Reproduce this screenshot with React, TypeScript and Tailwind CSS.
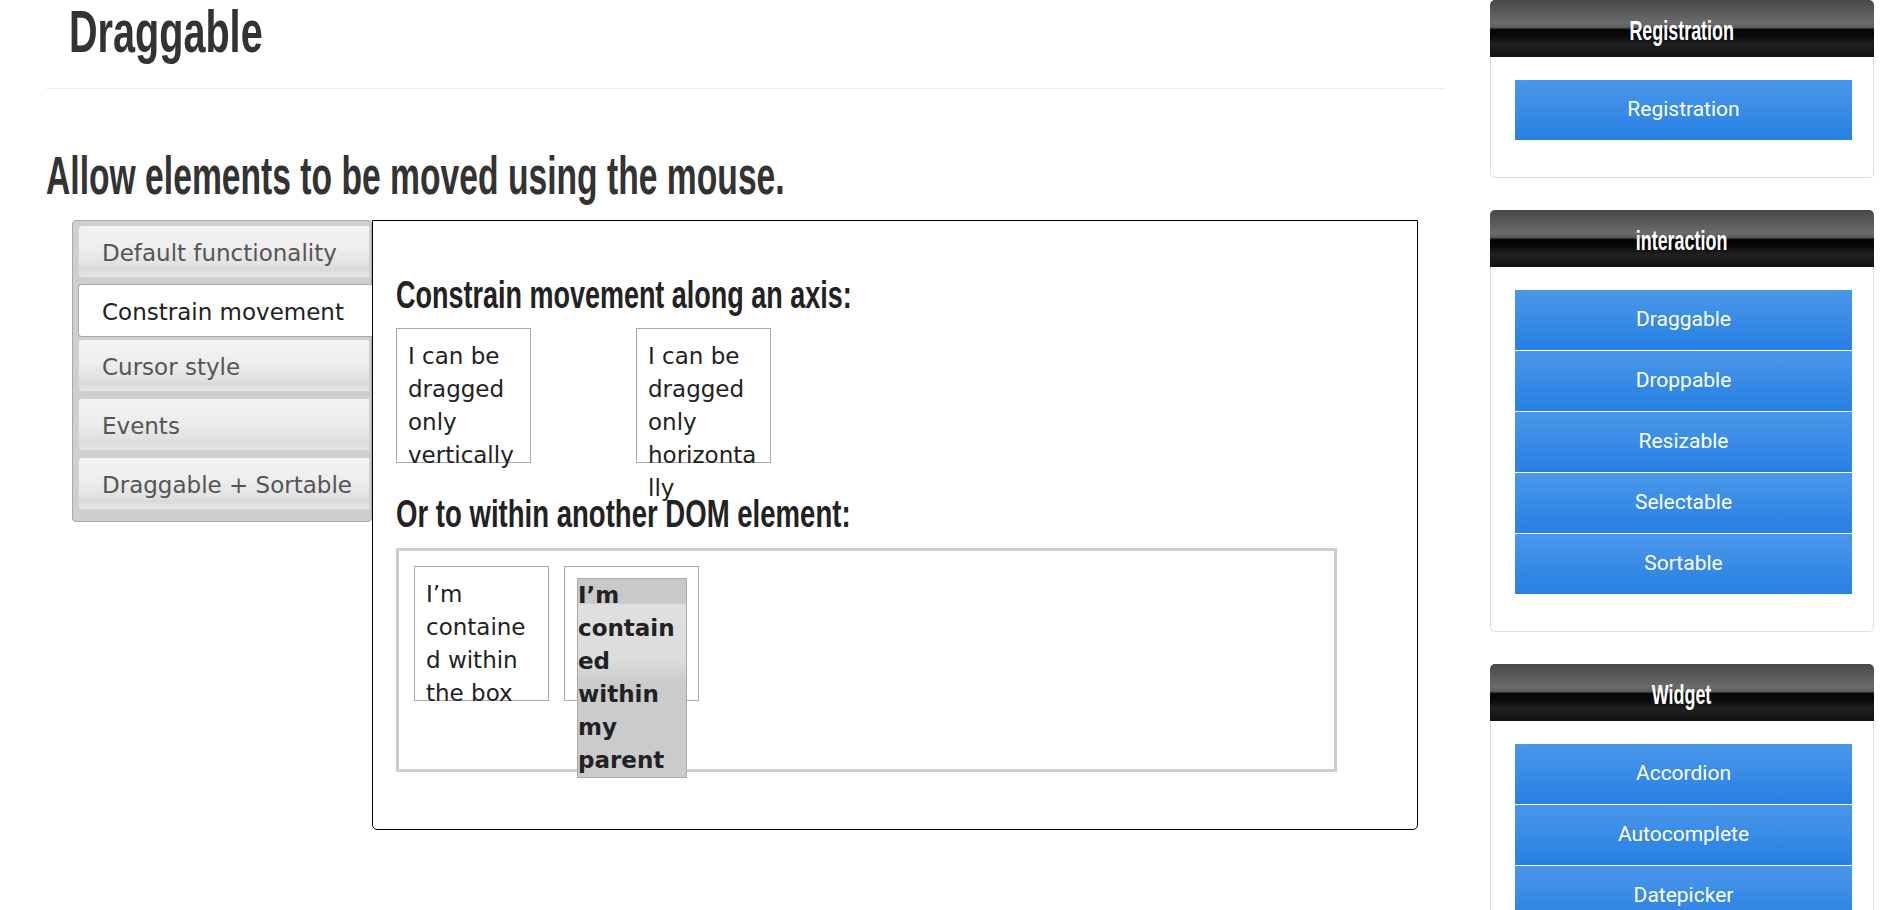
import React from 'react';

// Oswald is not available, so a bold sans is squeezed horizontally to get the same condensed look
const oswaldFont = "font-bold font-['Liberation_Sans','Arial',sans-serif]";
const squeeze = 'inline-block whitespace-nowrap';
const verdana = "font-['DejaVu_Sans','Verdana',sans-serif]";
const roboto = "font-['Roboto','Liberation_Sans',sans-serif]";

const tabs = ['Default functionality', 'Constrain movement', 'Cursor style', 'Events', 'Draggable + Sortable'];

const panels = [
  { title: 'Registration', items: ['Registration'] },
  { title: 'interaction', items: ['Draggable', 'Droppable', 'Resizable', 'Selectable', 'Sortable'] },
  {
    title: 'Widget',
    items: ['Accordion', 'Autocomplete', 'Datepicker', 'Menu', 'Slider', 'Tabs', 'Tooltip'],
  },
];

const Panel: React.FC<{ title: string; items: string[] }> = ({ title, items }) => (
  <div className="mb-[32px]">
    <div
      className={`h-[57px] pt-[5px] rounded-t-[5px] flex items-center justify-center text-white text-[28px] bg-[linear-gradient(to_bottom,#474747_0%,#6b6b6b_40%,#5c5c5c_48%,#050505_52%,#080808_62%,#202020_78%,#111_100%)] ${oswaldFont}`}
    >
      <span className={`${squeeze} origin-center scale-x-[0.64]`}>{title}</span>
    </div>
    <div className="border border-t-0 border-[#ddd] rounded-b-[5px] pl-[24px] pr-[21px] pt-[23px] pb-[37px] flex flex-col gap-px">
      {items.map((item) => (
        <div
          key={item}
          className={`h-[60px] flex items-center justify-center text-white text-[21px] bg-[linear-gradient(to_bottom,#4a97e9,#2780e3)] ${roboto}`}
        >
          {item}
        </div>
      ))}
    </div>
  </div>
);

const App: React.FC = () => {
  return (
    <div className="min-h-screen bg-white flex items-start text-[#333]">
      <main className="ml-[46px] w-[1398px] shrink-0">
        <h1 className={`h-[88px] pt-[2px] pl-[23px] text-[60px] leading-[60px] text-[#333] ${oswaldFont}`}>
          <span className={`${squeeze} origin-left scale-x-[0.66]`}>Draggable</span>
        </h1>
        <hr className="border-[#eee]" />
        <h2 className={`mt-[59px] h-[56px] text-[53px] leading-[56px] text-[#333] ${oswaldFont}`}>
          <span className={`${squeeze} origin-left scale-x-[0.635]`}>Allow elements to be moved using the mouse.</span>
        </h2>

        <div className="mt-[16px] mx-[26px] flex items-start">
          {/* vertical tabs */}
          <div className="w-[300px] shrink-0 border border-[#aaa] rounded-[4px] bg-[#cfcfcf] pt-[4px] pl-[5px] pb-[5px]">
            {tabs.map((tab, i) => {
              const active = i === 1;
              return (
                <div
                  key={tab}
                  className={
                    active
                      ? `relative z-10 w-[294px] h-[53px] mb-[2px] pt-[4px] flex items-center pl-[23px] bg-white border border-r-0 border-[#aaa] rounded-l-[4px] text-[23px] text-[#212121] ${verdana}`
                      : `w-[292px] h-[53px] mb-[6px] pt-[4px] flex items-center pl-[23px] border border-[#d3d3d3] rounded-l-[4px] text-[23px] text-[#555] bg-[linear-gradient(to_bottom,#f3f3f3_0%,#ededed_45%,#e2e2e2_75%,#dadada_85%,#e6e6e6_100%)] ${verdana}`
                  }
                >
                  {tab}
                </div>
              );
            })}
          </div>

          {/* demo panel */}
          <div className="flex-1 border border-black rounded-b-[5px] pt-[54px] pl-[23px] pb-[57px]">
            <h3 className={`h-[40px] text-[38px] leading-[40px] text-[#222] ${oswaldFont}`}>
              <span className={`${squeeze} origin-left scale-x-[0.71]`}>Constrain movement along an axis:</span>
            </h3>
            <div className={`mt-[13px] flex gap-[105px] text-[23px] leading-[33px] text-[#222] ${verdana}`}>
              <div className="w-[135px] h-[135px] border border-[#aaa] p-[11px] break-words">I can be dragged only vertically</div>
              <div className="w-[135px] h-[135px] border border-[#aaa] p-[11px] break-words">I can be dragged only horizontally</div>
            </div>

            <h3 className={`mt-[31px] h-[40px] text-[38px] leading-[40px] text-[#222] ${oswaldFont}`}>
              <span className={`${squeeze} origin-left scale-x-[0.725]`}>Or to within another DOM element:</span>
            </h3>
            <div
              className={`mt-[14px] w-[941px] h-[224px] border-[3px] border-[#ccc] p-[15px] flex items-start gap-[15px] text-[23px] leading-[33px] text-[#222] ${verdana}`}
            >
              <div className="w-[135px] h-[135px] shrink-0 border border-[#aaa] p-[11px] break-words">I’m contained within the box</div>
              <div className="w-[135px] h-[135px] shrink-0 border border-[#aaa] pt-[11px] pl-[12px] break-words">
                <div className="w-[110px] border border-[#aaa] font-bold bg-[linear-gradient(to_bottom,#c9c9c9_0px,#c9c9c9_24px,#e0e0e0_26px,#dcdcdc_80px,#cbcbcb_105px,#cbcbcb_100%)]">
                  I’m contained within my parent
                </div>
              </div>
            </div>
          </div>
        </div>
      </main>

      <aside className="ml-[46px] w-[384px] shrink-0">
        {panels.map((p) => (
          <Panel key={p.title} title={p.title} items={p.items} />
        ))}
      </aside>
    </div>
  );
};

export default App;
